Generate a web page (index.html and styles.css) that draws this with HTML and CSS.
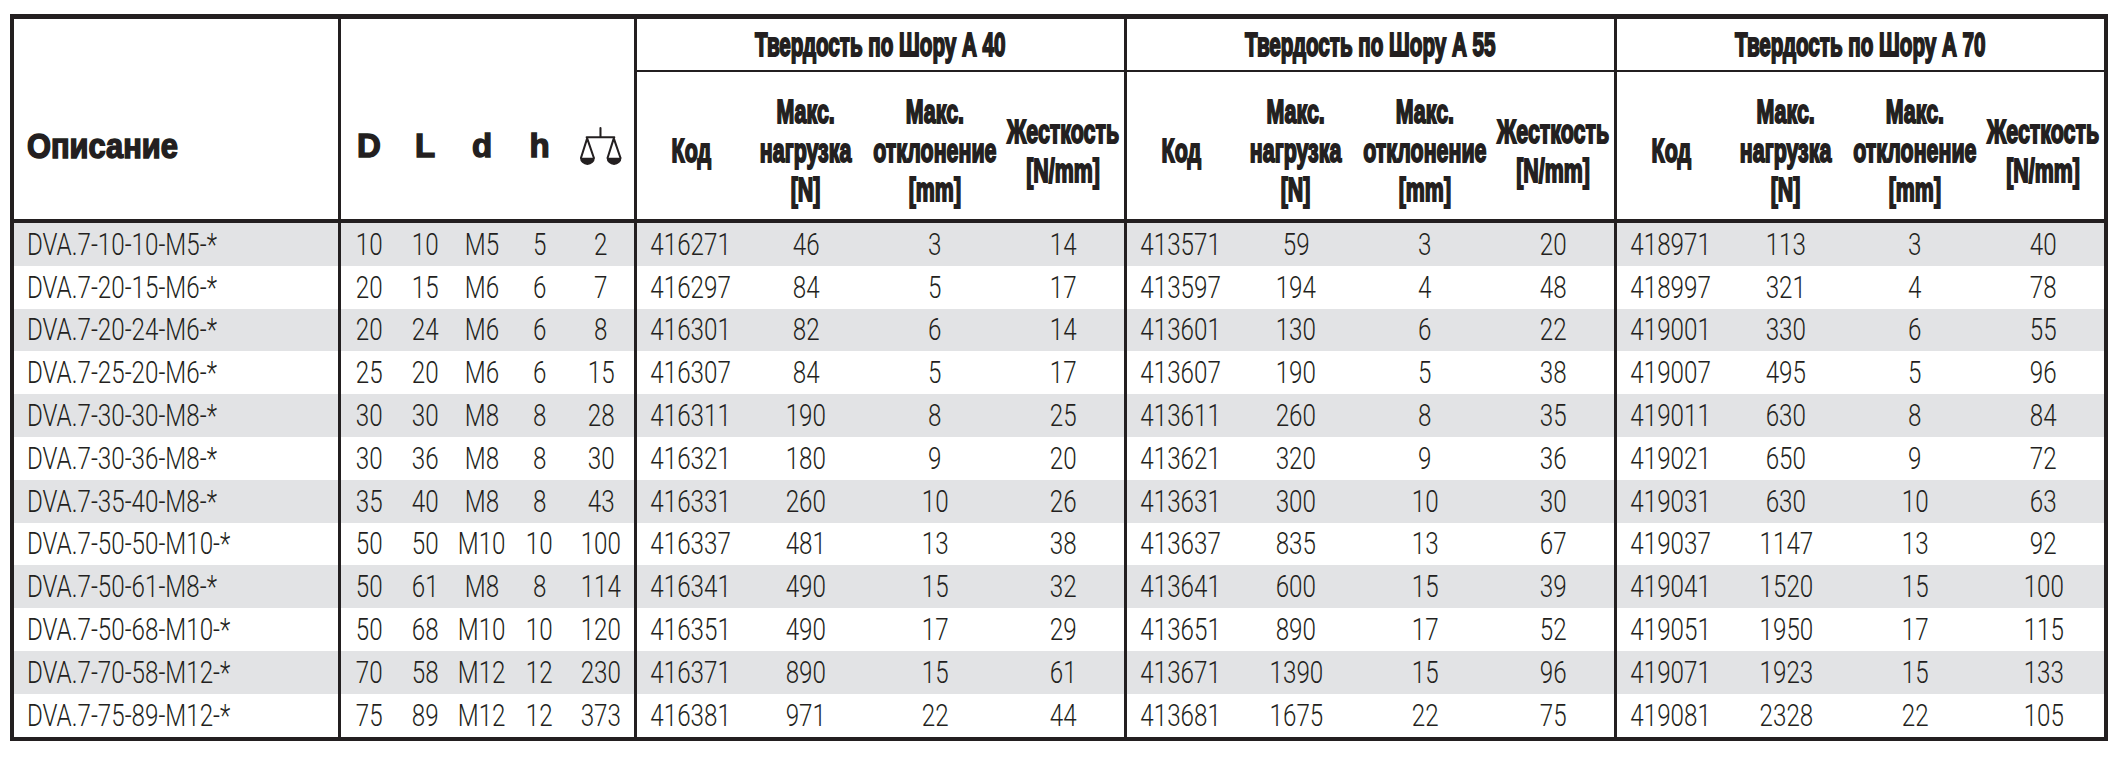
FILE: index.html
```html
<!DOCTYPE html>
<html lang="ru">
<head>
<meta charset="utf-8">
<title>DVA.7</title>
<link rel="stylesheet" href="styles.css">
</head>
<body>
<div class="sheet">
  <div class="head">
    <div class="hc desc"><span class="hb wide">Описание</span></div>
    <div class="hc dim"><span class="hb">D</span></div>
    <div class="hc dim"><span class="hb">L</span></div>
    <div class="hc dim"><span class="hb">d</span></div>
    <div class="hc dim"><span class="hb">h</span></div>
    <div class="hc dim e">
      <svg class="scale" viewBox="0 0 42 37" width="43" height="38">
        <g fill="none" stroke="#231f20" stroke-width="2" stroke-linejoin="round" stroke-linecap="round">
          <path d="M20 1V10M6.5 10H33.5"/>
          <path d="M7 11L1 30M7 11L13.5 30"/>
          <path d="M33 11L27 30M33 11L39.5 30"/>
        </g>
        <path d="M0 30A7.25 7 0 0 0 14.5 30Z M26 30A7.25 7 0 0 0 40.5 30Z" fill="#231f20"/>
      </svg>
    </div>
    <div class="hc title e"><span class="hb s t">Твердость по Шору А 40</span></div>
    <div class="hc title e"><span class="hb s t">Твердость по Шору А 55</span></div>
    <div class="hc title"><span class="hb s t">Твердость по Шору А 70</span></div>

    <div class="hc sub"><span class="hb s">Код</span></div>
    <div class="hc sub"><span class="hb s">Макс.<br>нагрузка<br>[N]</span></div>
    <div class="hc sub"><span class="hb s">Макс.<br>отклонение<br>[mm]</span></div>
    <div class="hc sub e"><span class="hb s">Жесткость<br>[N/mm]</span></div>

    <div class="hc sub"><span class="hb s">Код</span></div>
    <div class="hc sub"><span class="hb s">Макс.<br>нагрузка<br>[N]</span></div>
    <div class="hc sub"><span class="hb s">Макс.<br>отклонение<br>[mm]</span></div>
    <div class="hc sub e"><span class="hb s">Жесткость<br>[N/mm]</span></div>

    <div class="hc sub"><span class="hb s">Код</span></div>
    <div class="hc sub"><span class="hb s">Макс.<br>нагрузка<br>[N]</span></div>
    <div class="hc sub"><span class="hb s">Макс.<br>отклонение<br>[mm]</span></div>
    <div class="hc sub"><span class="hb s">Жесткость<br>[N/mm]</span></div>
  </div>

  <div class="body">
    <div class="row"><div class="d l"><span>DVA.7-10-10-M5-*</span></div><div class="d"><span>10</span></div><div class="d"><span>10</span></div><div class="d"><span>M5</span></div><div class="d"><span>5</span></div><div class="d e"><span>2</span></div><div class="d"><span>416271</span></div><div class="d"><span>46</span></div><div class="d"><span>3</span></div><div class="d e"><span>14</span></div><div class="d"><span>413571</span></div><div class="d"><span>59</span></div><div class="d"><span>3</span></div><div class="d e"><span>20</span></div><div class="d"><span>418971</span></div><div class="d"><span>113</span></div><div class="d"><span>3</span></div><div class="d"><span>40</span></div></div>
    <div class="row"><div class="d l"><span>DVA.7-20-15-M6-*</span></div><div class="d"><span>20</span></div><div class="d"><span>15</span></div><div class="d"><span>M6</span></div><div class="d"><span>6</span></div><div class="d e"><span>7</span></div><div class="d"><span>416297</span></div><div class="d"><span>84</span></div><div class="d"><span>5</span></div><div class="d e"><span>17</span></div><div class="d"><span>413597</span></div><div class="d"><span>194</span></div><div class="d"><span>4</span></div><div class="d e"><span>48</span></div><div class="d"><span>418997</span></div><div class="d"><span>321</span></div><div class="d"><span>4</span></div><div class="d"><span>78</span></div></div>
    <div class="row"><div class="d l"><span>DVA.7-20-24-M6-*</span></div><div class="d"><span>20</span></div><div class="d"><span>24</span></div><div class="d"><span>M6</span></div><div class="d"><span>6</span></div><div class="d e"><span>8</span></div><div class="d"><span>416301</span></div><div class="d"><span>82</span></div><div class="d"><span>6</span></div><div class="d e"><span>14</span></div><div class="d"><span>413601</span></div><div class="d"><span>130</span></div><div class="d"><span>6</span></div><div class="d e"><span>22</span></div><div class="d"><span>419001</span></div><div class="d"><span>330</span></div><div class="d"><span>6</span></div><div class="d"><span>55</span></div></div>
    <div class="row"><div class="d l"><span>DVA.7-25-20-M6-*</span></div><div class="d"><span>25</span></div><div class="d"><span>20</span></div><div class="d"><span>M6</span></div><div class="d"><span>6</span></div><div class="d e"><span>15</span></div><div class="d"><span>416307</span></div><div class="d"><span>84</span></div><div class="d"><span>5</span></div><div class="d e"><span>17</span></div><div class="d"><span>413607</span></div><div class="d"><span>190</span></div><div class="d"><span>5</span></div><div class="d e"><span>38</span></div><div class="d"><span>419007</span></div><div class="d"><span>495</span></div><div class="d"><span>5</span></div><div class="d"><span>96</span></div></div>
    <div class="row"><div class="d l"><span>DVA.7-30-30-M8-*</span></div><div class="d"><span>30</span></div><div class="d"><span>30</span></div><div class="d"><span>M8</span></div><div class="d"><span>8</span></div><div class="d e"><span>28</span></div><div class="d"><span>416311</span></div><div class="d"><span>190</span></div><div class="d"><span>8</span></div><div class="d e"><span>25</span></div><div class="d"><span>413611</span></div><div class="d"><span>260</span></div><div class="d"><span>8</span></div><div class="d e"><span>35</span></div><div class="d"><span>419011</span></div><div class="d"><span>630</span></div><div class="d"><span>8</span></div><div class="d"><span>84</span></div></div>
    <div class="row"><div class="d l"><span>DVA.7-30-36-M8-*</span></div><div class="d"><span>30</span></div><div class="d"><span>36</span></div><div class="d"><span>M8</span></div><div class="d"><span>8</span></div><div class="d e"><span>30</span></div><div class="d"><span>416321</span></div><div class="d"><span>180</span></div><div class="d"><span>9</span></div><div class="d e"><span>20</span></div><div class="d"><span>413621</span></div><div class="d"><span>320</span></div><div class="d"><span>9</span></div><div class="d e"><span>36</span></div><div class="d"><span>419021</span></div><div class="d"><span>650</span></div><div class="d"><span>9</span></div><div class="d"><span>72</span></div></div>
    <div class="row"><div class="d l"><span>DVA.7-35-40-M8-*</span></div><div class="d"><span>35</span></div><div class="d"><span>40</span></div><div class="d"><span>M8</span></div><div class="d"><span>8</span></div><div class="d e"><span>43</span></div><div class="d"><span>416331</span></div><div class="d"><span>260</span></div><div class="d"><span>10</span></div><div class="d e"><span>26</span></div><div class="d"><span>413631</span></div><div class="d"><span>300</span></div><div class="d"><span>10</span></div><div class="d e"><span>30</span></div><div class="d"><span>419031</span></div><div class="d"><span>630</span></div><div class="d"><span>10</span></div><div class="d"><span>63</span></div></div>
    <div class="row"><div class="d l"><span>DVA.7-50-50-M10-*</span></div><div class="d"><span>50</span></div><div class="d"><span>50</span></div><div class="d"><span>M10</span></div><div class="d"><span>10</span></div><div class="d e"><span>100</span></div><div class="d"><span>416337</span></div><div class="d"><span>481</span></div><div class="d"><span>13</span></div><div class="d e"><span>38</span></div><div class="d"><span>413637</span></div><div class="d"><span>835</span></div><div class="d"><span>13</span></div><div class="d e"><span>67</span></div><div class="d"><span>419037</span></div><div class="d"><span>1147</span></div><div class="d"><span>13</span></div><div class="d"><span>92</span></div></div>
    <div class="row"><div class="d l"><span>DVA.7-50-61-M8-*</span></div><div class="d"><span>50</span></div><div class="d"><span>61</span></div><div class="d"><span>M8</span></div><div class="d"><span>8</span></div><div class="d e"><span>114</span></div><div class="d"><span>416341</span></div><div class="d"><span>490</span></div><div class="d"><span>15</span></div><div class="d e"><span>32</span></div><div class="d"><span>413641</span></div><div class="d"><span>600</span></div><div class="d"><span>15</span></div><div class="d e"><span>39</span></div><div class="d"><span>419041</span></div><div class="d"><span>1520</span></div><div class="d"><span>15</span></div><div class="d"><span>100</span></div></div>
    <div class="row"><div class="d l"><span>DVA.7-50-68-M10-*</span></div><div class="d"><span>50</span></div><div class="d"><span>68</span></div><div class="d"><span>M10</span></div><div class="d"><span>10</span></div><div class="d e"><span>120</span></div><div class="d"><span>416351</span></div><div class="d"><span>490</span></div><div class="d"><span>17</span></div><div class="d e"><span>29</span></div><div class="d"><span>413651</span></div><div class="d"><span>890</span></div><div class="d"><span>17</span></div><div class="d e"><span>52</span></div><div class="d"><span>419051</span></div><div class="d"><span>1950</span></div><div class="d"><span>17</span></div><div class="d"><span>115</span></div></div>
    <div class="row"><div class="d l"><span>DVA.7-70-58-M12-*</span></div><div class="d"><span>70</span></div><div class="d"><span>58</span></div><div class="d"><span>M12</span></div><div class="d"><span>12</span></div><div class="d e"><span>230</span></div><div class="d"><span>416371</span></div><div class="d"><span>890</span></div><div class="d"><span>15</span></div><div class="d e"><span>61</span></div><div class="d"><span>413671</span></div><div class="d"><span>1390</span></div><div class="d"><span>15</span></div><div class="d e"><span>96</span></div><div class="d"><span>419071</span></div><div class="d"><span>1923</span></div><div class="d"><span>15</span></div><div class="d"><span>133</span></div></div>
    <div class="row"><div class="d l"><span>DVA.7-75-89-M12-*</span></div><div class="d"><span>75</span></div><div class="d"><span>89</span></div><div class="d"><span>M12</span></div><div class="d"><span>12</span></div><div class="d e"><span>373</span></div><div class="d"><span>416381</span></div><div class="d"><span>971</span></div><div class="d"><span>22</span></div><div class="d e"><span>44</span></div><div class="d"><span>413681</span></div><div class="d"><span>1675</span></div><div class="d"><span>22</span></div><div class="d e"><span>75</span></div><div class="d"><span>419081</span></div><div class="d"><span>2328</span></div><div class="d"><span>22</span></div><div class="d"><span>105</span></div></div>
  </div>
</div>
</body>
</html>
```

FILE: styles.css
```css
* { box-sizing: border-box; }

:root {
  --ink: #231f20;
  --stripe: #e2e3e5;
  --cols: 327px 56px 56px 58px 57px 69px
          108px 122px 136px 124px
          108px 122px 136px 124px
          108px 122px 136px 121px;
}

html, body { margin: 0; background: #fff; }

body {
  color: var(--ink);
  font-family: "Liberation Sans", Arial, sans-serif;
}

.sheet {
  margin: 14px 0 0 10px;
  width: 2098px;
  border: 4px solid var(--ink);
  border-top-width: 5px;
}

/* ---------- header ---------- */
.head {
  display: grid;
  grid-template-columns: var(--cols);
  grid-template-rows: 53px 147px;
  border-bottom: 4px solid var(--ink);
}

.hc {
  display: flex;
  align-items: center;
  justify-content: center;
  min-width: 0;
}

.hc.e { border-right: 3px solid var(--ink); }

.desc {
  grid-row: 1 / 3;
  justify-content: flex-start;
  padding: 54px 0 0 13px;
  border-right: 3px solid var(--ink);
}

.dim {
  grid-row: 1 / 3;
  padding-top: 54px;
}

.title {
  grid-column: span 4;
  border-bottom: 2px solid var(--ink);
}

.sub { padding-top: 10px; }

.hb {
  display: block;
  white-space: nowrap;
  text-align: center;
  font-weight: 700;
  font-size: 33px;
  line-height: 40px;
  -webkit-text-stroke: 1.4px var(--ink);
  flex: none;
}

.hb.s {
  font-size: 34px;
  line-height: 39px;
  transform: scaleX(0.63);
  -webkit-text-stroke-width: 2px;
}

.hb.s.t {
  font-size: 33px;
  line-height: 40px;
  transform: scaleX(0.625);
}

.hb.wide {
  font-size: 35px;
  transform: scaleX(0.88);
  transform-origin: left center;
  -webkit-text-stroke-width: 1.6px;
}

.scale { display: block; }

/* ---------- body ---------- */
.row {
  display: grid;
  grid-template-columns: var(--cols);
  height: 42.8px;
}

.row:nth-child(odd) { background: var(--stripe); }

.d {
  display: flex;
  align-items: center;
  justify-content: center;
  min-width: 0;
  font-family: Roboto, "Liberation Sans", sans-serif;
  font-weight: 300;
  font-size: 31px;
}

.d.e { border-right: 3px solid var(--ink); }

.d span {
  display: block;
  white-space: nowrap;
  flex: none;
  transform: scaleX(0.78);
}

.d.l {
  justify-content: flex-start;
  padding-left: 13px;
  border-right: 3px solid var(--ink);
}

.d.l span { transform-origin: left center; }
```
